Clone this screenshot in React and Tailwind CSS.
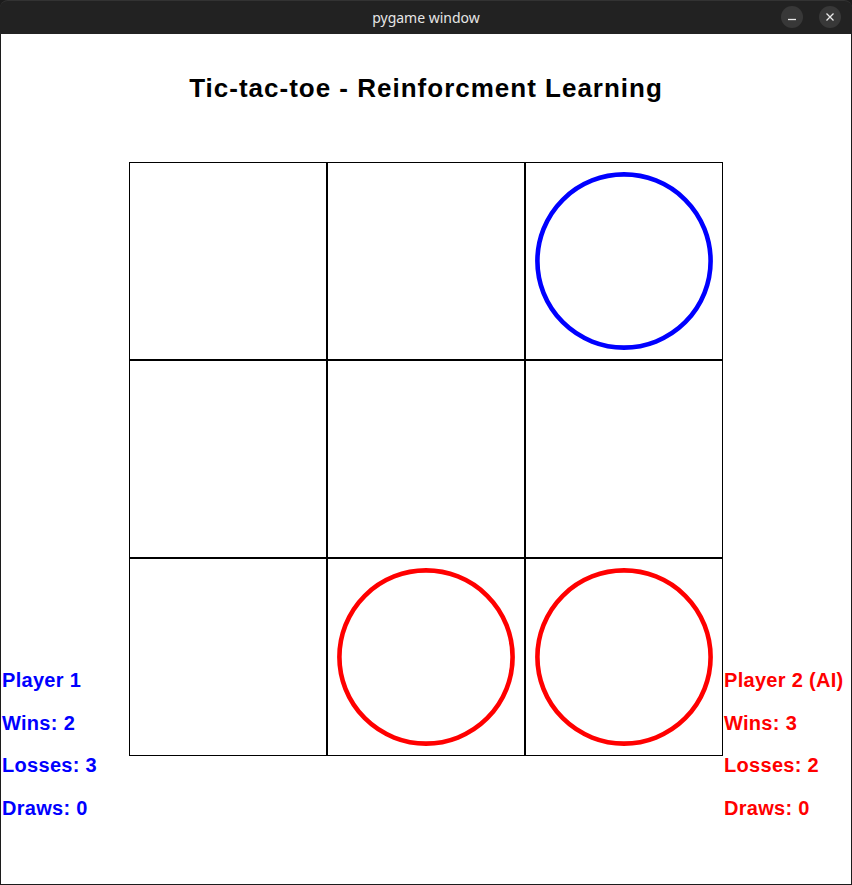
const board = [
  [null, null, 'blue'],
  [null, null, null],
  [null, 'red', 'red'],
];

const ringColor = { blue: '#0000ff', red: '#ff0000' };

function Ring({ color }) {
  return (
    <svg width="196" height="196" viewBox="0 0 196 196" className="block">
      <circle cx="98" cy="98" r="86.6" fill="none" stroke={ringColor[color]} strokeWidth="4.6" />
    </svg>
  );
}

function Stats({ title, wins, losses, draws, className }) {
  return (
    <div
      className={`mt-[508px] flex flex-col gap-[22.5px] pl-[1px] text-[20px] font-bold leading-[20px] tracking-[0.3px] whitespace-nowrap ${className}`}
      style={{ fontFamily: '"Liberation Sans", Arial, sans-serif' }}
    >
      <div>{title}</div>
      <div>Wins: {wins}</div>
      <div>Losses: {losses}</div>
      <div>Draws: {draws}</div>
    </div>
  );
}

export default function App() {
  return (
    <div className="w-[852px] h-[885px] bg-[#1c1c1c] flex flex-col overflow-hidden">
      {/* window title bar */}
      <div className="relative h-[34px] shrink-0 bg-[#222222] rounded-t-[8px] border-t border-[#333333] flex items-center justify-center">
        <span className="text-[14px] text-[#e6e6e6]" style={{ fontFamily: '"Noto Sans", "DejaVu Sans", sans-serif' }}>
          pygame window
        </span>
        <div className="absolute right-[11px] top-[5px] flex gap-[16px]">
          <div className="w-[22px] h-[22px] rounded-full bg-[#383838] flex items-center justify-center">
            <svg width="10" height="10" viewBox="0 0 10 10">
              <path d="M1 7.5h8" stroke="#e8e8e8" strokeWidth="1.3" />
            </svg>
          </div>
          <div className="w-[22px] h-[22px] rounded-full bg-[#383838] flex items-center justify-center">
            <svg width="10" height="10" viewBox="0 0 10 10">
              <path d="M1.5 1.5l7 7M8.5 1.5l-7 7" stroke="#e8e8e8" strokeWidth="1.3" />
            </svg>
          </div>
        </div>
      </div>

      {/* game surface */}
      <div className="mx-[1px] mb-[1px] flex-1 bg-white flex flex-col">
        <div
          className="pt-[41px] h-[128px] text-center text-[26px] font-bold leading-[26px] tracking-[1px] text-black"
          style={{ fontFamily: '"Liberation Sans", Arial, sans-serif' }}
        >
          Tic-tac-toe - Reinforcment Learning
        </div>

        <div className="flex items-start">
          <div className="w-[128px] shrink-0">
            <Stats title="Player 1" wins={2} losses={3} draws={0} className="text-[#0000ff]" />
          </div>

          <div className="grid grid-cols-[198px_198px_198px] grid-rows-[198px_198px_198px] shrink-0">
            {board.flat().map((cell, i) => (
              <div key={i} className="border border-black w-[198px] h-[198px] flex items-center justify-center">
                {cell && <Ring color={cell} />}
              </div>
            ))}
          </div>

          <div className="flex-1">
            <Stats title="Player 2 (AI)" wins={3} losses={2} draws={0} className="text-[#ff0000]" />
          </div>
        </div>
      </div>
    </div>
  );
}
